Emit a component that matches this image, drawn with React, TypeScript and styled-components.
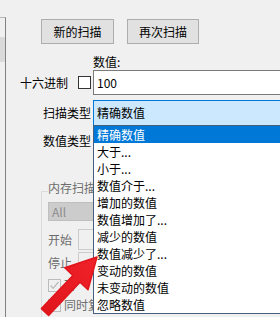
import React from "react";
import styled, { createGlobalStyle } from "styled-components";

const Global = createGlobalStyle`
  html, body { margin: 0; padding: 0; background: #f0f0f0; }
  body { font-family: "Noto Sans CJK SC", "Noto Sans", sans-serif; font-size: 12px; color: #000; }
`;

const Window = styled.div`
  position: relative;
  width: 280px;
  height: 317px;
  overflow: hidden;
  background: #f0f0f0;
  display: flex;
`;

const SidePanel = styled.div`
  flex: 0 0 5px;
  margin-top: 17px;
  border-top: 1px solid #b4b4b4;
  border-right: 1px solid #828282;
  padding-top: 19px;
`;

const Thumb = styled.div`
  height: 25px;
  background: #dadada;
`;

const Main = styled.div`
  flex: 1;
  padding: 19px 0 0 14px;
  display: flex;
  flex-direction: column;
  min-width: 0;
`;

const ButtonRow = styled.div`
  display: flex;
  gap: 13px;
  margin-left: 21px;
`;

const Button = styled.button<{ $w: number }>`
  width: ${(p) => p.$w}px;
  height: 25px;
  box-sizing: border-box;
  background: #e1e1e1;
  border: 1px solid #adadad;
  font: inherit;
  font-size: 12px;
  color: #000;
  padding: 0;
  line-height: 16px;
`;

const TopLabel = styled.div`
  margin: 10px 0 0 73px;
  line-height: 16px;
  height: 16px;
`;

const FormRow = styled.div<{ $mt: number; $h: number }>`
  display: grid;
  grid-template-columns: 73px 200px;
  align-items: center;
  margin-top: ${(p) => p.$mt}px;
  height: ${(p) => p.$h}px;
`;

const LabelCell = styled.div`
  display: flex;
  align-items: center;
  justify-content: flex-end;
  padding-right: 2px;
  line-height: 16px;
  white-space: nowrap;
`;

const HexCell = styled.div`
  display: flex;
  align-items: center;
  gap: 10px;
  line-height: 16px;
  white-space: nowrap;
`;

const Check = styled.span<{ $disabled?: boolean }>`
  width: 13px;
  height: 13px;
  box-sizing: border-box;
  border: 1px solid ${(p) => (p.$disabled ? "#bcbcbc" : "#333333")};
  background: ${(p) => (p.$disabled ? "#f0f0f0" : "#ffffff")};
  display: inline-flex;
  align-items: center;
  justify-content: center;
  flex-shrink: 0;
`;

const TextInput = styled.div`
  height: 25px;
  box-sizing: border-box;
  border: 1px solid #7a7a7a;
  background: #fff;
  padding-left: 3px;
  display: flex;
  align-items: center;
  line-height: 16px;
`;

const Combo = styled.div<{ $focus?: boolean }>`
  height: ${(p) => (p.$focus ? 26 : 22)}px;
  box-sizing: border-box;
  border: 1px solid ${(p) => (p.$focus ? "#0078d7" : "#adadad")};
  background: ${(p) => (p.$focus ? "#cce8ff" : "#e5e5e5")};
  padding-left: 3px;
  display: flex;
  align-items: center;
  line-height: 16px;
`;

const Group = styled.fieldset`
  margin: 28px 0 0 21px;
  padding: 0 0 40px 6px;
  border: 1px solid #dcdcdc;
  border-right: none;
  border-bottom: none;
  min-width: 0;
`;

const Legend = styled.legend`
  padding: 0 2px 6px 0;
  line-height: 16px;
  color: #6d6d6d;
`;

const DisabledCombo = styled.div`
  width: 120px;
  height: 19px;
  box-sizing: border-box;
  background: #cccccc;
  border: 1px solid #bfbfbf;
  color: #8c8c8c;
  padding-left: 3px;
  display: flex;
  align-items: center;
  line-height: 16px;
`;

const GroupRow = styled.div<{ $mt: number }>`
  display: flex;
  align-items: center;
  margin-top: ${(p) => p.$mt}px;
  color: #6d6d6d;
  line-height: 16px;
  white-space: nowrap;
`;

const GroupLabel = styled.span`
  width: 30px;
`;

const DisabledInput = styled.div`
  width: 120px;
  height: 21px;
  box-sizing: border-box;
  border: 1px solid #cccccc;
  background: #f0f0f0;
`;

const CheckRow = styled.div<{ $mt: number }>`
  display: flex;
  align-items: center;
  gap: 3px;
  margin-top: ${(p) => p.$mt}px;
  color: #6d6d6d;
  line-height: 16px;
  white-space: nowrap;
`;

const DropList = styled.ul`
  position: absolute;
  left: 93px;
  top: 125px;
  width: 200px;
  margin: 0;
  padding: 0;
  list-style: none;
  background: #fff;
  border: 1px solid #44607e;
  z-index: 2;
`;

const Item = styled.li<{ $sel?: boolean }>`
  height: 17px;
  line-height: 17px;
  padding-left: 3px;
  background: ${(p) => (p.$sel ? "#0078d7" : "transparent")};
  color: ${(p) => (p.$sel ? "#fff" : "#000")};
  white-space: nowrap;
`;

const ArrowLayer = styled.svg`
  position: absolute;
  left: 0;
  top: 0;
  z-index: 3;
  pointer-events: none;
`;

const items = [
  "精确数值",
  "大于...",
  "小于...",
  "数值介于...",
  "增加的数值",
  "数值增加了...",
  "减少的数值",
  "数值减少了...",
  "变动的数值",
  "未变动的数值",
  "忽略数值",
];

export default function App() {
  return (
    <>
      <Global />
      <Window>
        <SidePanel>
          <Thumb />
        </SidePanel>
        <Main>
          <ButtonRow>
            <Button $w={73}>新的扫描</Button>
            <Button $w={72}>再次扫描</Button>
          </ButtonRow>
          <TopLabel>数值:</TopLabel>
          <FormRow $mt={0} $h={25}>
            <HexCell>
              <span>十六进制</span>
              <Check />
            </HexCell>
            <TextInput>100</TextInput>
          </FormRow>
          <FormRow $mt={5} $h={26}>
            <LabelCell>扫描类型</LabelCell>
            <Combo $focus>精确数值</Combo>
          </FormRow>
          <FormRow $mt={4} $h={22}>
            <LabelCell>数值类型</LabelCell>
            <Combo />
          </FormRow>
          <Group>
            <Legend>内存扫描</Legend>
            <DisabledCombo>All</DisabledCombo>
            <GroupRow $mt={8}>
              <GroupLabel>开始</GroupLabel>
              <DisabledInput />
            </GroupRow>
            <GroupRow $mt={2}>
              <GroupLabel>停止</GroupLabel>
              <DisabledInput />
            </GroupRow>
            <CheckRow $mt={4}>
              <Check $disabled>
                <svg width="11" height="11" viewBox="0 0 11 11">
                  <path d="M1.5 5.5 L4.2 8.2 L9.5 2" fill="none" stroke="#bcbcbc" strokeWidth="1.3" />
                </svg>
              </Check>
              <span>可</span>
            </CheckRow>
            <CheckRow $mt={4}>
              <Check $disabled />
              <span>同时复</span>
            </CheckRow>
          </Group>
        </Main>
        <DropList>
          {items.map((t, i) => (
            <Item key={t} $sel={i === 0}>
              {t}
            </Item>
          ))}
        </DropList>
        <ArrowLayer width="280" height="317" viewBox="0 0 280 317">
          <defs>
            <linearGradient id="ag" x1="0" y1="1" x2="1" y2="0">
              <stop offset="0" stopColor="#e0161b" />
              <stop offset="1" stopColor="#f0212a" />
            </linearGradient>
          </defs>
          <path
            d="M48.6 315.4 L80 282.2 L88 289.8 L97 257 L64.8 267.8 L72.8 275.4 L41.4 308.6 Z"
            fill="url(#ag)"
            stroke="#e0161b"
            strokeWidth="1.5"
            strokeLinejoin="round"
          />
        </ArrowLayer>
      </Window>
    </>
  );
}
